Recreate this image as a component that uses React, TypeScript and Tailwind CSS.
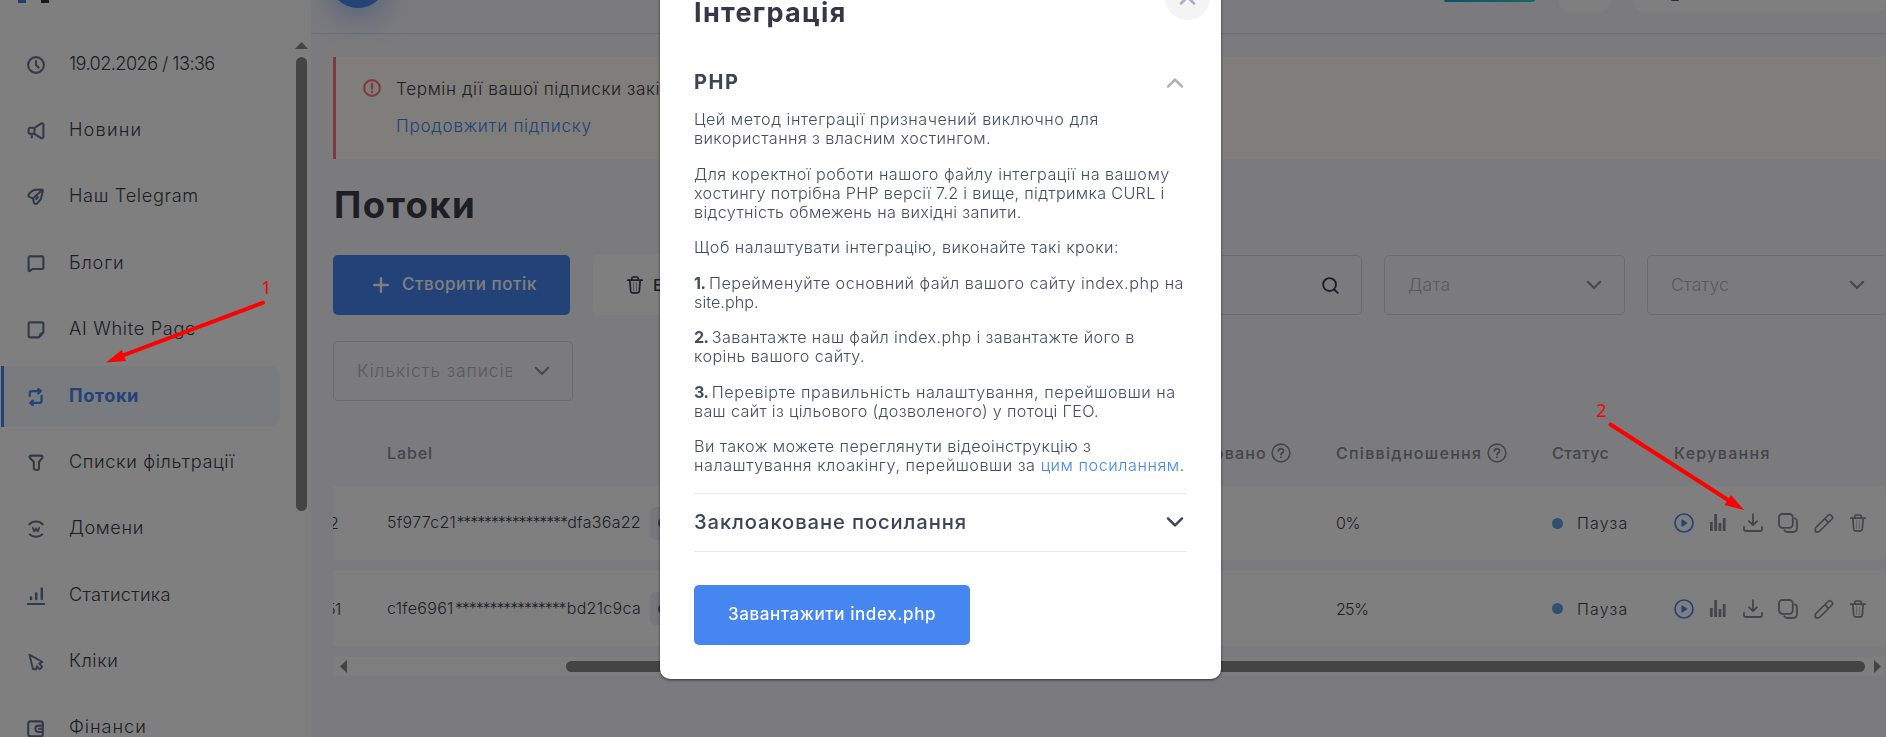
import React from "react";
import clsx from "clsx";

type IconProps = { className?: string };

const Svg = ({ className, size = 18, stroke = 2.1, children }: { className?: string; size?: number; stroke?: number; children: React.ReactNode }) => (
    <svg
        width={size}
        height={size}
        viewBox="0 0 18 18"
        fill="none"
        stroke="currentColor"
        strokeWidth={stroke}
        strokeLinecap="round"
        strokeLinejoin="round"
        className={clsx("shrink-0", className)}
    >
        {children}
    </svg>
);

const ClockIcon = () => (
    <Svg>
        <circle cx="9" cy="9" r="7.9" />
        <path d="M9 5v4l2.6 2.6" />
    </Svg>
);

const HornIcon = () => (
    <Svg>
        <path d="M7.5 5.8 14 1.6c1.2-.6 2.4 0 2.4 1.2v12c0 1.2-1.2 1.8-2.4 1.2L7.5 11.8M7.5 5.8H3.6c-1.2 0-2 .8-2 1.9v2.2c0 1.1.8 1.9 2 1.9h3.9zM4.8 12v3.4" />
    </Svg>
);

const PlaneIcon = () => (
    <Svg>
        <path d="M15.1 1.5 8 1.9c-1.5.1-5 2.6-6.3 4.4-.7 1.1-.2 2.1.8 2.6l3.3 1.5 1.3 4.3c.4 1.3 1.9 1.7 3 .8l3-3.5c.7-.8 1-1.500 1.200-2.500l1.500-6.700c.1-.8-.1-1.300-.7-1.300zM14.800 2.200 6.200 10.300M10.800 8.800l-1.600 2.400" />
    </Svg>
);

const ChatIcon = () => (
    <Svg>
        <path d="M3.2 1.4h11.6c1 0 1.6.6 1.6 1.6v9.4c0 1-.6 1.6-1.6 1.6H5.4L3 15.900c-.7.4-1.400.1-1.400-.7V3c0-1 .6-1.600 1.600-1.600z" />
    </Svg>
);

const NoteIcon = () => (
    <Svg>
        <path d="M3.2 1.4h11.6c1 0 1.6.6 1.6 1.6v8.6l-4.6 4.8H3.2c-1 0-1.6-.6-1.6-1.6V3c0-1 .6-1.6 1.6-1.6z" />
        <path d="m16 11.6-2.8.8-1.2 3.6" strokeWidth="1.3" />
    </Svg>
);

const FlowIcon = () => (
    <Svg stroke={2.3}>
        <path d="M2.8 8V5.2c0-1.2.8-2 2-2h8.4M11.2.9l2.6 2.3-2.6 2.3M14.6 8v4.8c0 1.2-.8 2-2 2H3.8M5.8 12.6l-2.4 2.2 2.4 2.3" />
    </Svg>
);

const FunnelIcon = () => (
    <Svg>
        <path d="M4 1.6h10c1.4 0 1.9 1.2 1.2 2.2L12 8v6.6c0 1.8-4.6 1.8-5.2 0V8L2.9 3.8C2.1 2.8 2.6 1.6 4 1.6z" />
    </Svg>
);

const DomainIcon = () => (
    <Svg>
        <path d="M2.4 4.4C5.4.6 12.6.6 15.6 4.4M2.8 14.6c3 2.9 9.4 2.9 12.4 0" />
        <path d="m5.6 7.6 1.7 4L9 8.2l1.7 3.4 1.7-4" strokeWidth="1.6" />
    </Svg>
);

const StatsIcon = () => (
    <Svg>
        <path d="M1 17h16" />
        <path d="M4 12v-1.6M9.2 12V6.6M14.8 12V1.4" strokeWidth="2.5" />
    </Svg>
);

const CursorIcon = () => (
    <Svg stroke={1.9}>
        <path d="M2.4 1.6 15.4 9l-3.2 1.6 3 3.2-2.6 2.6-2.8-3.2-.8 3.4-3-.6z" />
    </Svg>
);

const WalletIcon = () => (
    <Svg>
        <path d="M3.4 1.4h10.2c1.4 0 2.2.8 2.2 2v10.8c0 1.4-.8 2.2-2.2 2.2H3.4c-1.4 0-2.2-.8-2.2-2.2V3.4c0-1.2.8-2 2.2-2zM15.8 5.6h-4.4c-4 0-4 6.4 0 6.4h4.4M12 8.8h2" />
    </Svg>
);

const Chevron = ({ className }: IconProps) => (
    <svg width="18" height="10" viewBox="0 0 18 10" fill="none" stroke="currentColor" strokeWidth="2.4" strokeLinecap="round" strokeLinejoin="round" className={className}>
        <path d="m2 1.4 7 7 7-7" />
    </svg>
);

const TrashIcon = ({ className }: IconProps) => (
    <Svg className={className} stroke={1.7}>
        <path d="M1.8 4.2h14.4M5.8 4V2.4c0-.8.6-1.4 1.4-1.4h3.6c.8 0 1.4.6 1.4 1.4V4M3.8 4.4l.9 10.8c.1 1 .8 1.6 1.7 1.6h5.2c.9 0 1.6-.6 1.7-1.6l.9-10.8" />
        <path d="M7.6 6.6v8M10.4 6.6v8" strokeWidth=".5" />
    </Svg>
);

const HelpIcon = () => (
    <Svg size={20} stroke={1.4}>
        <circle cx="9" cy="9" r="8" />
        <path d="M6.7 7.3c0-3 4.8-2.8 4.6 0C11.2 8.8 9 8.7 9 10.4M9 12.8v.1" strokeWidth="1.6" />
    </Svg>
);

const menu = [
    { icon: ClockIcon, label: "19.02.2026 / 13:36", cls: "tracking-[-0.58px]" },
    { icon: HornIcon, label: "Новини", cls: "tracking-[1.15px]" },
    { icon: PlaneIcon, label: "Наш Telegram", cls: "tracking-[0.65px]" },
    { icon: ChatIcon, label: "Блоги", cls: "tracking-[0.8px]" },
    { icon: NoteIcon, label: "AI White Page", cls: "tracking-[0.68px]" },
    { icon: FlowIcon, label: "Потоки", cls: "tracking-[0.55px]", active: true },
    { icon: FunnelIcon, label: "Списки фільтрації", cls: "tracking-[0.62px]" },
    { icon: DomainIcon, label: "Домени", cls: "tracking-[0.6px]" },
    { icon: StatsIcon, label: "Статистика", cls: "tracking-[0.32px]" },
    { icon: CursorIcon, label: "Кліки", cls: "tracking-[0.55px]" },
    { icon: WalletIcon, label: "Фінанси", cls: "tracking-[0.95px]" },
];

const rows = [
    { id: "2", start: "5f977c21", end: "dfa36a22", cls: "tracking-[0.3px]", ratio: "0%", ratioCls: "tracking-[-0.4px]", height: "h-[74px]" },
    { id: "51", start: "c1fe6961", end: "bd21c9ca", cls: "tracking-[0.3px]", ratio: "25%", ratioCls: "tracking-[-0.7px]", height: "h-[75px]" },
];

const Sidebar = () => (
    <aside className="flex h-full w-[311px] shrink-0 flex-col bg-white">
        {/* Bottom edge of the logo */}
        <div className="flex h-[34px] shrink-0 gap-[15px] pl-[18px]">
            <span className="h-[3px] w-2 bg-[#3f7be0]" />
            <span className="h-[3px] w-2 bg-[#33343c]" />
        </div>
        <div className="flex min-h-0 flex-1 overflow-hidden">
            <nav className="flex w-[280px] flex-col gap-[5px] pl-px">
                {menu.map(({ icon: Icon, label, cls, active }) => (
                    <a
                        key={label}
                        className={clsx(
                            "flex h-[61.4px] shrink-0 items-center gap-6 border-l-[3px] pl-[23px] text-[18.2px] whitespace-nowrap",
                            active ? "rounded-r-lg border-[#4686f0] bg-[#f5f7ff] font-bold text-[#4686f0]" : "border-transparent font-[350] text-[#3b3e4b]"
                        )}
                    >
                        <span className={active ? "text-[#4686f0]" : "text-[#66758f]"}>
                            <Icon />
                        </span>
                        <span className={clsx("-mt-[3px]", cls)}>{label}</span>
                    </a>
                ))}
            </nav>
            <div className="ml-auto flex w-[19px] flex-col items-center bg-[#fcfcfc] pt-2 pr-px">
                <svg width="13" height="7" viewBox="0 0 13 7" fill="#888">
                    <path d="M6.5 0 13 7H0z" />
                </svg>
                <span className="mt-2 h-[454px] w-[11px] rounded-full bg-[#888]" />
            </div>
        </div>
    </aside>
);

const Header = () => (
    <header className="flex h-[34px] shrink-0 items-start border-b border-[#dcdce8] pl-[18px]">
        <span className="-mt-[50px] size-[58px] rounded-full bg-[#4686f0] shadow-[0_10px_30px_rgba(70,134,240,0.45)]" />
        <div className="ml-auto flex items-start">
            <span className="h-[2px] w-[91px] rounded-b bg-linear-to-r from-[#22a0d8] to-[#36cfc0]" />
            <span className="ml-6 h-3 w-[52px] rounded-b-[10px] bg-white" />
            <span className="ml-[23px] flex h-3 w-[252px] rounded-b-[10px] bg-white pl-[37px]">
                <span className="h-px w-2 rounded-b bg-[#55557a]" />
            </span>
        </div>
    </header>
);

const Select = ({ label, cls, className }: { label: string; cls?: string; className?: string }) => (
    <div className={clsx("flex h-[60px] shrink-0 items-center justify-between rounded-[5px] border border-[#d5d5e0] pr-[22px] pl-[23px] text-[17.5px] font-[350] text-[#b2b2c0]", className)}>
        <span className={clsx("w-[155px] overflow-hidden whitespace-nowrap", cls)}>{label}</span>
        <Chevron className="w-4 shrink-0 text-[#8e8e9c]" />
    </div>
);

const RowActions = () => (
    <div className="flex w-[192px] items-center justify-between text-[#888893]">
        <Svg size={20} stroke={1.5} className="text-[#4686f0]">
            <circle cx="9" cy="9" r="8.1" />
            <path d="M7.2 6.2v5.6L11.5 9z" fill="currentColor" strokeWidth="1" />
        </Svg>
        <svg width="16" height="18" viewBox="0 0 16 18" fill="currentColor">
            <path d="M0 8h2.7v9H0zM4.3 0h2.7v17H4.300zM8.600 9h2.700v8H8.600zM12.800 4h2.700v13h-2.700z" />
        </svg>
        <Svg size={20} stroke={1.6} className="ml-px">
            <path d="M9 1v9M5.3 7.3 9 10.8l3.700-3.500M.9 12.600v2.200c0 .9.5 1.400 1.400 1.400h13.400c.9 0 1.400-.5 1.400-1.400v-2.200" />
        </Svg>
        <Svg size={20} stroke={1.6}>
            <rect x=".9" y=".9" width="12.400" height="12.400" rx="3" />
            <path d="M15.200 4.900c1.200.4 1.900 1.300 1.900 2.700v6c0 2-1.300 3.500-3.500 3.500h-5c-1.500 0-2.400-.5-2.900-1.700" />
        </Svg>
        <Svg size={20} stroke={1.5}>
            <path d="M1.700 13.200 12.800 2c.8-.8 1.700-.8 2.500 0l.9.9c.8.8.8 1.700 0 2.500L5 16.400c-.5.5-1 .6-1.600.6H2c-.5 0-.8-.3-.8-.8v-1.600c0-.6.1-1 .5-1.400zM9.800 5.200l3.200 3.200" />
        </Svg>
        <TrashIcon className="-mx-px" />
    </div>
);

const Table = () => (
    <section className="mt-[25px] overflow-hidden">
        <div className="mb-[7px] flex h-[53px] items-center text-base font-medium text-[#888898]">
            <span className="w-[780px] pl-[54px] tracking-[0.9px]">Label</span>
            <span className="flex w-[223px] items-center justify-end gap-1 pr-[45px] tracking-[1.2px] whitespace-nowrap">
                Заблоковано <HelpIcon />
            </span>
            <span className="flex w-[216px] items-center gap-[5px] tracking-[1.3px]">
                Співвідношення <HelpIcon />
            </span>
            <span className="w-[122px] tracking-[0.45px]">Статус</span>
            <span className="tracking-[1.3px]">Керування</span>
        </div>
        <div className="flex flex-col gap-[11px]">
            {rows.map((row) => (
                <div key={row.id} className={clsx("flex items-center rounded-r-[5px] bg-white text-base font-[350] text-[#3b3e4b]", row.height)}>
                    <span className="flex w-[54px] shrink-0">
                        {/* Scrolled under the left edge */}
                        <span className={clsx("tracking-tight", row.id === "51" ? "-ml-[7px]" : "-ml-1")}>{row.id}</span>
                    </span>
                    <span className={clsx("-mt-[2px] flex w-[254px] shrink-0 justify-between whitespace-nowrap", row.cls)}>
                        {row.start}
                        <span className="tracking-[-1.1px]">****************</span>
                        {row.end}
                    </span>
                    <span className="ml-[9px] flex h-[33px] w-[33px] shrink-0 items-center rounded-md bg-[#ececf6] pl-2">
                        <span className="size-3 rounded-full border-2 border-[#66668a]" />
                    </span>
                    <span className={clsx("ml-[653px] w-[216px] shrink-0", row.ratioCls)}>{row.ratio}</span>
                    <span className="flex w-[122px] shrink-0 items-center gap-[14px] tracking-[1.2px]">
                        <span className="size-[11px] rounded-full bg-[#679fde]" />
                        Пауза
                    </span>
                    <RowActions />
                </div>
            ))}
        </div>
        <div className="mt-[11px] flex h-[19px] items-center bg-[#fcfcfc] px-[7px]">
            <svg width="7" height="13" viewBox="0 0 7 13" fill="#888" className="shrink-0">
                <path d="M7 0v13L0 6.5z" />
            </svg>
            <span className="ml-[219px] h-[11px] w-[1299px] shrink-0 rounded-full bg-[#888]" />
            <svg width="7" height="13" viewBox="0 0 7 13" fill="#888" className="ml-[9px] shrink-0">
                <path d="M0 0v13l7-6.5z" />
            </svg>
        </div>
    </section>
);

const Modal = () => (
    <div className="fixed inset-0 z-10 flex items-start justify-center bg-black/50 pr-[5px]">
        <div className="-mt-10 h-[719px] w-[561px] rounded-[10px] bg-white px-[34px] shadow-[0_1px_3px_rgba(0,0,0,0.6)]">
            <div className="flex h-[86px] justify-between pt-[15px]">
                <h2 className="mt-[22px] text-[27px] leading-8 font-bold tracking-[1.3px] text-[#36364a]">Інтеграція</h2>
                <button className="-mr-[23px] flex size-[45px] items-center justify-center rounded-full bg-[#f4f4f4] text-[#a7afc0]">
                    <svg width="17" height="17" viewBox="0 0 17 17" fill="none" stroke="currentColor" strokeWidth="2.5" strokeLinecap="round">
                        <path d="m2 1.5 13 13M15 1.5l-13 13" />
                    </svg>
                </button>
            </div>
            <div className="mt-[21px] flex h-8 items-center justify-between pr-[3px]">
                <h3 className="-mt-[2px] text-[20px] font-bold tracking-[1.5px] text-[#3c4558]">PHP</h3>
                <Chevron className="rotate-180 text-[#a9b1c1]" />
            </div>
            <div className="mt-[11px] flex flex-col gap-[16.5px] text-[16.2px] leading-[19px] font-[350] tracking-[0.44px] whitespace-nowrap text-[#434d61]">
                <p>
                    <span className="tracking-[0.51px]">Цей метод інтеграції призначений виключно для</span>
                    <br />
                    <span className="tracking-[0.41px]">використання з власним хостингом.</span>
                </p>
                <p>
                    <span className="tracking-[0.45px]">Для коректної роботи нашого файлу інтеграції на вашому</span>
                    <br />
                    <span className="tracking-[0.31px]">хостингу потрібна PHP версії 7.2 і вище, підтримка CURL і</span>
                    <br />
                    <span className="tracking-[0.34px]">відсутність обмежень на вихідні запити.</span>
                </p>
                <p>Щоб налаштувати інтеграцію, виконайте такі кроки:</p>
                <p>
                    <b className="mr-px tracking-[-0.6px]">1. </b>
                    <span className="tracking-[0.48px]">Перейменуйте основний файл вашого сайту index.php на</span>
                    <br />
                    <span className="tracking-[0.04px]">site.php.</span>
                </p>
                <p>
                    <b className="mr-px tracking-[-0.7px]">2. </b>
                    <span className="tracking-[0.37px]">Завантажте наш файл index.php і завантажте його в</span>
                    <br />
                    <span className="tracking-[0.38px]">корінь вашого сайту.</span>
                </p>
                <p>
                    <b className="mr-px tracking-[-0.7px]">3. </b>
                    <span className="tracking-[0.54px]">Перевірте правильність налаштування, перейшовши на</span>
                    <br />
                    <span className="tracking-[0.33px]">ваш сайт із цільового (дозволеного) у потоці ГЕО.</span>
                </p>
                <p>
                    <span className="tracking-[0.4px]">Ви також можете переглянути відеоінструкцію з</span>
                    <br />
                    <span className="tracking-[0.54px]">
                        налаштування клоакінгу, перейшовши за <a className="text-[#4686f0]">цим посиланням</a>.
                    </span>
                </p>
            </div>
            <div className="mt-[17.5px] flex h-[59px] items-center justify-between border-y border-[#e9eaf1] pr-[3px] text-[#3c4558]">
                <h3 className="text-[20.2px] font-medium tracking-[0.9px]">Заклоаковане посилання</h3>
                <Chevron />
            </div>
            <button className="mt-[33px] flex h-[60px] w-[276px] items-center justify-center rounded-[5px] bg-[#4686f0] text-[17px] font-medium tracking-[0.6px] text-white">
                Завантажити index.php
            </button>
        </div>
    </div>
);

/* Red step markers drawn over everything */
const Annotations = () => (
    <svg width="1886" height="737" viewBox="0 0 1886 737" className="pointer-events-none absolute top-0 left-0 z-20" fill="#ff0000">
        <path d="M263 302.7 120 356.5M1610.5 424.5 1732 502.5" stroke="#ff0000" strokeWidth="4" strokeLinecap="round" />
        <path d="M106 362.5 121.7 350l4.3 11zM1744 510l-13-15-6.5 10z" />
        <text x="261" y="294" className="font-['Noto_Sans'] text-[18px]">1</text>
        <text x="1596" y="417" className="font-['Noto_Sans'] text-[18px]">2</text>
    </svg>
);

export default function App() {
    return (
        <div className="relative flex h-[737px] w-full overflow-hidden bg-[#f6f6fa] font-['Inter',sans-serif]">
            <Sidebar />
            <main className="flex min-w-0 flex-1 flex-col">
                <Header />
                <div className="overflow-hidden pt-[23px] pl-[22px]">
                    <div className="flex h-[102px] gap-[15px] border-l-[3px] border-[#ff7385] bg-[#fffdf6] pl-[27px] text-[17.2px] font-[350] whitespace-nowrap">
                        <Svg className="mt-[22px] text-[#ff7385]">
                            <circle cx="9" cy="9" r="7.9" />
                            <path d="M9 4.8v4.6M9 12.7v.2" strokeWidth="2.4" />
                        </Svg>
                        <div className="flex flex-col gap-[13px] pt-5">
                            <span className="leading-6 tracking-[0.58px] text-[#3b3e4b]">Термін дії вашої підписки закінчується</span>
                            <a className="leading-6 tracking-[0.7px] text-[#4686f0]">Продовжити підписку</a>
                        </div>
                    </div>
                    <h1 className="mt-[21px] ml-px h-[50px] text-[36.5px] leading-[50px] font-bold tracking-[1.4px] text-[#3b3e4b]">Потоки</h1>
                    <div className="mt-[25px] flex gap-[22px]">
                        <button className="flex h-[60px] w-[237px] shrink-0 items-center gap-[13px] rounded-[5px] bg-[#4686f0] pl-10 text-[17px] font-medium tracking-[0.55px] text-white">
                            <svg width="16" height="16" viewBox="0 0 16 16" stroke="currentColor" strokeWidth="2.4" strokeLinecap="round">
                                <path d="M8 1.2v13.6M1.2 8h13.6" />
                            </svg>
                            Створити потік
                        </button>
                        <button className="ml-px flex h-[60px] w-[170px] shrink-0 items-center gap-[9px] rounded-[5px] bg-white pl-[33px] text-[16.5px] font-medium text-[#3b3e4b]">
                            <TrashIcon />
                            Видалити
                        </button>
                        <div className="ml-auto flex h-[60px] w-[241px] shrink-0 items-center justify-end rounded-[5px] border border-[#d5d5e0] pr-[22px] text-[#3b3a55]">
                            <Svg size={17} stroke={2}>
                                <circle cx="8" cy="8" r="6.8" />
                                <path d="m13 13.2 3.6 3.6" />
                            </Svg>
                        </div>
                        <Select label="Дата" cls="tracking-[0.24px]" className="w-[241px]" />
                        <Select label="Статус" cls="tracking-[0.06px]" className="-mr-[2px] w-[241px]" />
                    </div>
                    <Select label="Кількість записів" cls="tracking-[0.9px]" className="mt-[26px] w-[240px]" />
                    <Table />
                </div>
            </main>
            <Modal />
            <Annotations />
        </div>
    );
}
